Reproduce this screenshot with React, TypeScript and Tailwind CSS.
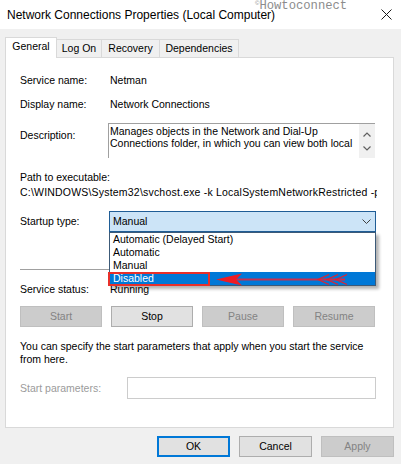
import React from "react";

function Btn({
  children,
  disabled,
  focused,
  size,
}: {
  children: React.ReactNode;
  disabled?: boolean;
  focused?: boolean;
  size: "wide" | "narrow";
}) {
  return (
    <div
      className={
        "flex items-center justify-center h-[21px] " +
        (size === "wide" ? "w-[82px] " : "w-[73px] ") +
        (disabled
          ? "bg-[#cccccc] border border-[#bfbfbf] text-[#838383]"
          : focused
          ? "bg-[#e1e1e1] border-2 border-[#0078d7] text-black"
          : "bg-[#e1e1e1] border border-[#adadad] text-black")
      }
    >
      {children}
    </div>
  );
}

export default function App() {
  return (
    <div className="relative w-[401px] h-[464px] overflow-hidden bg-[#f0f0f0] text-black font-['Liberation_Sans',Arial,sans-serif] text-[10.5px] leading-[13px]">
      {/* title bar */}
      <div className="relative flex items-center justify-between h-[29px] bg-white pl-[7px] pr-[9px]">
        <span className="text-[12px] leading-[14px]">
          Network Connections Properties (Local Computer)
        </span>
        <svg width="11" height="11" viewBox="0 0 11 11">
          <path d="M0.5 0.5L10.5 10.5M10.5 0.5L0.5 10.5" stroke="#1a1a1a" strokeWidth="1" />
        </svg>
        <span className="absolute left-[255px] top-0 flex items-start text-[#8c8c8c]">
          <span className="text-[6px] leading-[6px]">©</span>
          <span className="font-['Liberation_Mono',monospace] text-[12.2px] leading-[12px]">
            Howtoconnect
          </span>
        </span>
      </div>

      {/* tabs */}
      <div className="flex items-end h-[20px] mt-[8px] ml-[5px]">
        <div className="relative z-10 self-start h-[21px] w-[52px] bg-white border border-b-0 border-[#d9d9d9] flex justify-center pt-[2px]">
          General
        </div>
        <div className="h-[18px] w-[45px] border-t border-r border-[#d9d9d9] flex justify-center pt-[2px]">
          Log On
        </div>
        <div className="h-[18px] w-[58px] border-t border-r border-[#d9d9d9] flex justify-center pt-[2px]">
          Recovery
        </div>
        <div className="h-[18px] w-[79px] border-t border-r border-[#d9d9d9] flex justify-center pt-[2px]">
          Dependencies
        </div>
      </div>

      {/* tab page */}
      <div className="ml-[5px] w-[389px] h-[371px] border border-[#d9d9d9] bg-white pt-[10px] pl-[14px]">
        <div className="flex items-center h-[24px]">
          <span className="w-[90px] shrink-0">Service name:</span>
          <span>Netman</span>
        </div>
        <div className="flex items-center h-[24px]">
          <span className="w-[90px] shrink-0">Display name:</span>
          <span>Network Connections</span>
        </div>

        <div className="flex mt-[7px]">
          <span className="w-[88px] shrink-0 pt-[6px]">Description:</span>
          <div className="flex w-[267px] h-[35px] border-t border-l border-[#a0a0a0]">
            <div className="flex-1 overflow-hidden pl-[1px] pt-[1px] leading-[12px] whitespace-nowrap">
              <div>Manages objects in the Network and Dial-Up</div>
              <div>Connections folder, in which you can view both local</div>
            </div>
            <div className="w-[16px] bg-[#f0f0f0] flex flex-col items-center justify-between pt-[8px] pb-[7px]">
              <svg width="8" height="5" viewBox="0 0 8 5">
                <path d="M0.5 4.5L4 1L7.5 4.5" fill="none" stroke="#606060" strokeWidth="1.2" />
              </svg>
              <svg width="8" height="5" viewBox="0 0 8 5">
                <path d="M0.5 0.5L4 4L7.5 0.5" fill="none" stroke="#606060" strokeWidth="1.2" />
              </svg>
            </div>
          </div>
        </div>

        <div className="mt-[12px] leading-[15px]">
          <div>Path to executable:</div>
          <div className="w-[357px] overflow-hidden whitespace-nowrap tracking-[0.2px]">
            C:\WINDOWS\System32\svchost.exe -k LocalSystemNetworkRestricted -p
          </div>
        </div>

        <div className="flex items-center h-[21px] mt-[11px]">
          <span className="w-[89px] shrink-0">Startup type:</span>
          <div className="relative flex items-center justify-between w-[267px] h-[21px] border border-[#1f5d96] bg-[#cce4f7] pl-[3px] pr-[4px]">
            <span>Manual</span>
            <svg width="9" height="5" viewBox="0 0 9 5">
              <path d="M0.5 0.5L4.5 4.5L8.5 0.5" fill="none" stroke="#404040" strokeWidth="1" />
            </svg>
            <div className="absolute z-20 left-[-1px] top-[20px] w-[267px] bg-white border border-[#3c5a78] shadow-[3px_3px_3px_rgba(0,0,0,0.3)]">
              <div className="h-[13px] pl-[3px]">Automatic (Delayed Start)</div>
              <div className="h-[13px] pl-[3px]">Automatic</div>
              <div className="h-[13px] pl-[3px]">Manual</div>
              <div className="h-[13px] pl-[3px] bg-[#0078d7] text-white">Disabled</div>
            </div>
          </div>
        </div>

        <div className="mt-[37px] h-px w-[356px] bg-[#a0a0a0]" />

        <div className="flex items-center h-[18px] mt-[10px]">
          <span className="w-[90px] shrink-0">Service status:</span>
          <span>Running</span>
        </div>

        <div className="flex gap-[9px] mt-[8px]">
          <Btn size="wide" disabled>Start</Btn>
          <Btn size="wide">Stop</Btn>
          <Btn size="wide" disabled>Pause</Btn>
          <Btn size="wide" disabled>Resume</Btn>
        </div>

        <div className="mt-[13px] whitespace-nowrap">
          <div>You can specify the start parameters that apply when you start the service</div>
          <div>from here.</div>
        </div>

        <div className="flex items-center h-[22px] mt-[11px]">
          <span className="w-[107px] shrink-0 text-[#9b9b9b]">Start parameters:</span>
          <div className="w-[249px] h-[22px] border border-[#cccccc] bg-white" />
        </div>
      </div>

      {/* dialog buttons */}
      <div className="flex justify-end gap-[9px] mt-[8px] pr-[7px]">
        <Btn size="narrow" focused>OK</Btn>
        <Btn size="narrow">Cancel</Btn>
        <Btn size="narrow" disabled>Apply</Btn>
      </div>

      {/* annotation */}
      <div className="absolute z-30 left-[108px] top-[272px] w-[102px] h-[14px] border-2 border-[#e8302a]" />
      <svg
        className="absolute z-30 left-[214px] top-[272px]"
        width="135"
        height="15"
        viewBox="0 0 135 15"
      >
        <path d="M22 7.5H131" stroke="#c8304f" strokeWidth="1.8" />
        <path d="M2 7.5L28 1.5L22 7.5L28 13.5Z" fill="#f01c24" />
        <path d="M115 2.5L104 7.5L115 12.5M124 2.5L113 7.5L124 12.5M133 2.5L122 7.5L133 12.5" fill="none" stroke="#e8202a" strokeWidth="1.2" />
      </svg>
    </div>
  );
}
